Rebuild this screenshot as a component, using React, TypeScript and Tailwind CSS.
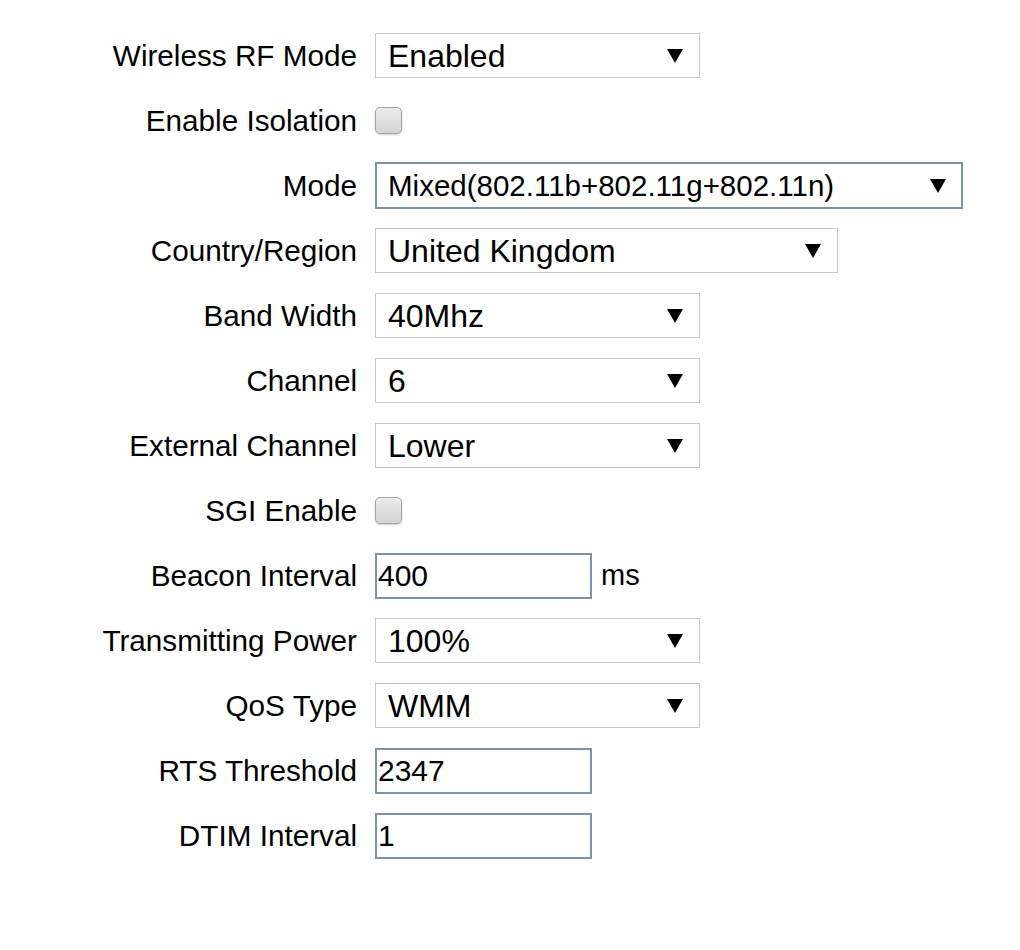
import React from "react";

const Arrow = () => (
  <svg width="16" height="14" viewBox="0 0 16 14" className="shrink-0">
    <polygon points="0,0 16,0 8,14" fill="#000" />
  </svg>
);

function Select({ value, width, focus = false }: { value: string; width: string; focus?: boolean }) {
  return (
    <div
      className={
        focus
          ? `${width} h-[47px] border-2 border-[#7d93a8] bg-white flex items-center justify-between pl-[11px] pr-[15px]`
          : `${width} h-[45px] border border-[#c8c8c8] bg-white flex items-center justify-between pl-[12px] pr-[16px]`
      }
    >
      <span className={focus ? "text-[29.5px] leading-none text-black" : "text-[32px] leading-none text-black"}>{value}</span>
      <Arrow />
    </div>
  );
}

function Input({ value }: { value: string }) {
  return (
    <div className="w-[217px] h-[46px] border-2 border-[#7d93a8] bg-white flex items-center pl-[1px]">
      <span className="text-[30px] leading-none text-black">{value}</span>
    </div>
  );
}

function Checkbox() {
  return (
    <div className="w-[27px] h-[27px] rounded-[5px] border border-[#a3a3a3] bg-gradient-to-b from-[#ececec] to-[#d4d4d4] shadow-[0_1px_2px_rgba(0,0,0,0.2)]" />
  );
}

function Row({ label, children }: { label: string; children: React.ReactNode }) {
  return (
    <div className="flex items-center h-[65px]">
      <div className="w-[357px] text-right text-[29.7px] leading-none text-black whitespace-nowrap">{label}</div>
      <div className="ml-[18px] flex items-center">{children}</div>
    </div>
  );
}

export default function App() {
  return (
    <div className="w-[1020px] h-[950px] bg-white pt-[23px] font-['Liberation_Sans',Arial,sans-serif]">
      <Row label="Wireless RF Mode">
        <Select value="Enabled" width="w-[325px]" />
      </Row>
      <Row label="Enable Isolation">
        <Checkbox />
      </Row>
      <Row label="Mode">
        <Select value="Mixed(802.11b+802.11g+802.11n)" width="w-[588px]" focus />
      </Row>
      <Row label="Country/Region">
        <Select value="United Kingdom" width="w-[463px]" />
      </Row>
      <Row label="Band Width">
        <Select value="40Mhz" width="w-[325px]" />
      </Row>
      <Row label="Channel">
        <Select value="6" width="w-[325px]" />
      </Row>
      <Row label="External Channel">
        <Select value="Lower" width="w-[325px]" />
      </Row>
      <Row label="SGI Enable">
        <Checkbox />
      </Row>
      <Row label="Beacon Interval">
        <Input value="400" />
        <span className="ml-[9px] text-[29px] leading-none text-black">ms</span>
      </Row>
      <Row label="Transmitting Power">
        <Select value="100%" width="w-[325px]" />
      </Row>
      <Row label="QoS Type">
        <Select value="WMM" width="w-[325px]" />
      </Row>
      <Row label="RTS Threshold">
        <Input value="2347" />
      </Row>
      <Row label="DTIM Interval">
        <Input value="1" />
      </Row>
    </div>
  );
}
